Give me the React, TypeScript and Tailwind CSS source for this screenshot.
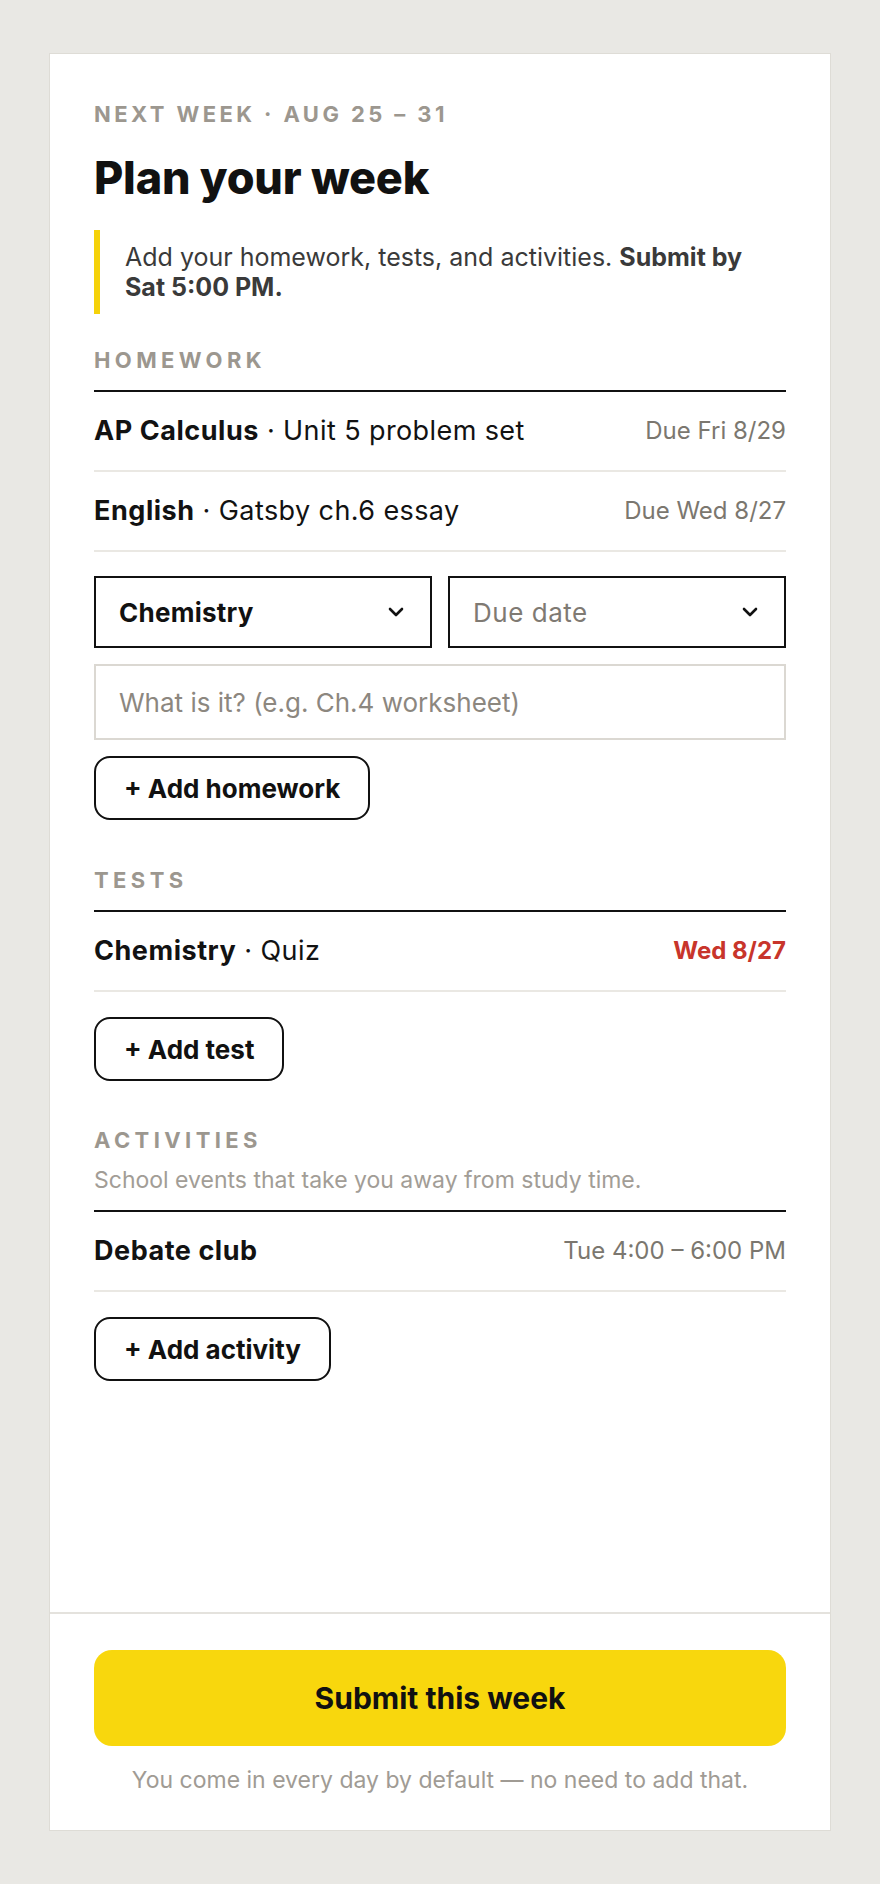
import React from 'react';

// --- Small pieces ---

const Chevron = () => (
    <svg width="16" height="10" viewBox="0 0 16 10" fill="none" stroke="#111" strokeWidth="2.6" strokeLinecap="round" strokeLinejoin="round">
        <path d="M2 2 L8 8 L14 2" />
    </svg>
);

const SectionLabel = ({ children }: { children: React.ReactNode }) => (
    <h2 className="text-[22px] leading-[28px] font-bold tracking-[0.2em] text-[#9c978f] uppercase">{children}</h2>
);

type RowProps = {
    subject: string;
    detail?: string;
    right: string;
    rightClass: string;
};

const ItemRow = ({ subject, detail, right, rightClass }: RowProps) => (
    <div className="flex h-[80px] items-center justify-between border-b-2 border-[#eae8e3]">
        <p className="text-[27px] tracking-[0.015em] text-[#121212]">
            <span className="font-bold tracking-[0.02em]">{subject}</span>
            {detail && <span> · {detail}</span>}
        </p>
        <span className={rightClass}>{right}</span>
    </div>
);

const AddButton = ({ label }: { label: string }) => (
    <button
        type="button"
        className="inline-flex h-16 items-center rounded-[16px] border-2 border-[#111] px-[28px] text-[26px] font-bold text-[#111]"
    >
        + {label}
    </button>
);

// --- Main Component ---

export default function App() {
    return (
        <div className="flex min-h-screen flex-col items-center bg-[#e9e8e4] py-[53px] font-['Inter',sans-serif]">
            <div className="flex w-[782px] flex-1 flex-col border border-[#dedcd6] bg-white">
                <main className="flex-1 px-[44px] pt-[46px]">
                    <p className="text-[22px] leading-[28px] font-bold tracking-[0.155em] text-[#9c978f]">
                        NEXT WEEK · AUG 25 – 31
                    </p>
                    <h1 className="mt-6 text-[45px] leading-[52px] font-extrabold tracking-[-0.005em] text-[#111]">
                        Plan your week
                    </h1>

                    {/* Deadline note */}
                    <div className="mt-[26px] border-l-[6px] border-[#f5d20a] py-3 pl-[25px]">
                        <p className="text-[25px] leading-[30px] text-[#3a3a3a]">
                            Add your homework, tests, and activities. <b className="font-bold">Submit by</b>{' '}
                            <b className="font-bold">Sat 5:00 PM.</b>
                        </p>
                    </div>

                    {/* Homework */}
                    <section className="mt-8">
                        <SectionLabel>Homework</SectionLabel>
                        <div className="mt-4 border-t-2 border-[#111]">
                            <ItemRow subject="AP Calculus" detail="Unit 5 problem set" right="Due Fri 8/29" rightClass="text-[24px] text-[#7b776f]" />
                            <ItemRow subject="English" detail="Gatsby ch.6 essay" right="Due Wed 8/27" rightClass="text-[24px] text-[#7b776f]" />
                        </div>

                        <div className="mt-6 grid grid-cols-2 gap-4">
                            <button type="button" className="flex h-[72px] items-center justify-between border-2 border-[#111] pr-[26px] pl-[23px]">
                                <span className="text-[26px] font-bold tracking-[0.01em] text-[#111]">Chemistry</span>
                                <Chevron />
                            </button>
                            <button type="button" className="flex h-[72px] items-center justify-between border-2 border-[#111] pr-[26px] pl-[23px]">
                                <span className="text-[26px] tracking-[0.02em] text-[#7f7a73]">Due date</span>
                                <Chevron />
                            </button>
                        </div>
                        <input
                            className="mt-4 block h-[76px] w-full border-2 border-[#dbd8d2] px-[23px] text-[26px] text-[#111] outline-none placeholder:text-[#8c877f]"
                            placeholder="What is it? (e.g. Ch.4 worksheet)"
                        />
                        <div className="mt-4">
                            <AddButton label="Add homework" />
                        </div>
                    </section>

                    {/* Tests */}
                    <section className="mt-[46px]">
                        <SectionLabel>Tests</SectionLabel>
                        <div className="mt-4 border-t-2 border-[#111]">
                            <ItemRow subject="Chemistry" detail="Quiz" right="Wed 8/27" rightClass="text-[24px] font-bold text-[#c8352b]" />
                        </div>
                        <div className="mt-[25px]">
                            <AddButton label="Add test" />
                        </div>
                    </section>

                    {/* Activities */}
                    <section className="mt-[45px]">
                        <SectionLabel>Activities</SectionLabel>
                        <p className="mt-3 text-[23px] leading-[28px] text-[#a29d96]">School events that take you away from study time.</p>
                        <div className="mt-4 border-t-2 border-[#111]">
                            <ItemRow subject="Debate club" right="Tue 4:00 – 6:00 PM" rightClass="text-[24px] text-[#7b776f]" />
                        </div>
                        <div className="mt-[25px]">
                            <AddButton label="Add activity" />
                        </div>
                    </section>
                </main>

                <footer className="border-t-2 border-[#e4e2dd] px-[44px] pt-9 pb-9">
                    <button type="button" className="flex h-24 w-full items-center justify-center rounded-[18px] bg-[#f8d70d] text-[30px] font-bold text-[#111]">
                        Submit this week
                    </button>
                    <p className="mt-5 text-center text-[23px] leading-[28px] text-[#a09b94]">
                        You come in every day by default — no need to add that.
                    </p>
                </footer>
            </div>
        </div>
    );
}
